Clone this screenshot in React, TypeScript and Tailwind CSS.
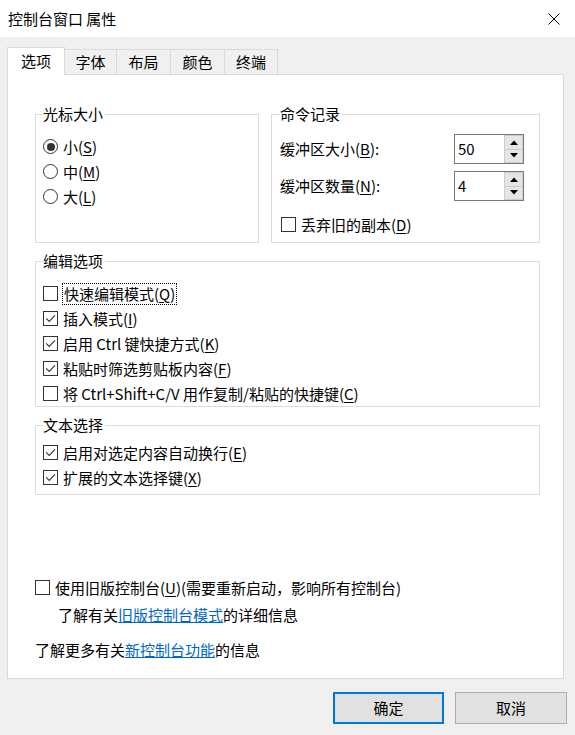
import React from "react";

function Check({ checked }: { checked?: boolean }) {
  return (
    <span className="w-[15px] h-[15px] border border-[#333333] bg-white flex items-center justify-center shrink-0">
      {checked && (
        <svg width="13" height="13" viewBox="0 0 13 13">
          <path d="M2.2 6.4 L5.2 9.4 L11 3.4" fill="none" stroke="#333333" strokeWidth="1.1" />
        </svg>
      )}
    </span>
  );
}

function Radio({ checked }: { checked?: boolean }) {
  return (
    <span className="w-[15px] h-[15px] rounded-full border border-[#333333] bg-white flex items-center justify-center shrink-0">
      {checked && <span className="w-[8px] h-[8px] rounded-full bg-[#333333]" />}
    </span>
  );
}

function Key({ k }: { k: string }) {
  return (
    <>
      (<u className="underline-offset-2">{k}</u>)
    </>
  );
}

function Spin({ value }: { value: string }) {
  return (
    <div className="w-[70px] h-[30px] border border-[#7a7a7a] bg-white flex">
      <span className="flex-1 pl-[3px] leading-[28px]">{value}</span>
      <div className="w-[19px] flex flex-col">
        <div className="flex-1 bg-[#e6e6e6] border border-[#cccccc] flex items-center justify-center">
          <svg width="8" height="5" viewBox="0 0 8 5">
            <path d="M0 5 L4 0.5 L8 5 Z" fill="#000" />
          </svg>
        </div>
        <div className="flex-1 bg-[#e6e6e6] border border-t-0 border-[#cccccc] flex items-center justify-center">
          <svg width="8" height="5" viewBox="0 0 8 5">
            <path d="M0 0 L4 4.5 L8 0 Z" fill="#000" />
          </svg>
        </div>
      </div>
    </div>
  );
}

function Row({ children }: { children: React.ReactNode }) {
  return <div className="h-[25px] flex items-center gap-[5px]">{children}</div>;
}

export default function App() {
  const tabs = [
    { label: "字体", w: "w-[52px]" },
    { label: "布局", w: "w-[54px]" },
    { label: "颜色", w: "w-[54px]" },
    { label: "终端", w: "w-[53px]" },
  ];

  return (
    <div className="w-[575px] h-[735px] bg-[#f0f0f0] flex flex-col font-['Noto_Sans_CJK_SC','Noto_Sans',sans-serif] text-[15px] leading-[20px] text-black">
      {/* title bar */}
      <div className="h-[37px] bg-white flex items-center justify-between pl-[8px] pr-[15px] shrink-0">
        <span>控制台窗口 属性</span>
        <svg width="12" height="12" viewBox="0 0 12 12">
          <path d="M0.5 0.5 L11.5 11.5 M11.5 0.5 L0.5 11.5" stroke="#000" strokeWidth="1" />
        </svg>
      </div>

      {/* tabs */}
      <div className="h-[37px] flex items-end pl-[7px] shrink-0">
        <div className="relative z-10 w-[58px] h-[28px] -mb-px bg-white border border-b-0 border-[#d9d9d9] flex items-center justify-center pb-[1px]">
          选项
        </div>
        {tabs.map((t) => (
          <div
            key={t.label}
            className={`${t.w} h-[25px] border-t border-r border-[#d9d9d9] flex items-center justify-center`}
          >
            {t.label}
          </div>
        ))}
      </div>

      {/* panel */}
      <div className="ml-[7px] w-[557px] h-[605px] bg-white border border-[#d9d9d9] pl-[27px] pt-[29px] shrink-0">
        <div className="w-[505px] h-[139px] flex gap-[12px]">
          <fieldset className="w-[224px] h-full border border-[#dcdcdc] pl-[7px]">
            <legend className="pr-[2px]">光标大小</legend>
            <div className="pt-[10px]">
              <Row>
                <Radio checked />
                <span>
                  小<Key k="S" />
                </span>
              </Row>
              <Row>
                <Radio />
                <span>
                  中<Key k="M" />
                </span>
              </Row>
              <Row>
                <Radio />
                <span>
                  大<Key k="L" />
                </span>
              </Row>
            </div>
          </fieldset>

          <fieldset className="w-[269px] h-full border border-[#dcdcdc] pl-[8px] pr-[15px]">
            <legend className="pr-[2px]">命令记录</legend>
            <div className="pt-[10px]">
              <div className="h-[30px] flex items-center justify-between">
                <span>
                  缓冲区大小<Key k="B" />:
                </span>
                <Spin value="50" />
              </div>
              <div className="h-[30px] mt-[7px] flex items-center justify-between">
                <span>
                  缓冲区数量<Key k="N" />:
                </span>
                <Spin value="4" />
              </div>
              <div className="mt-[11px] h-[25px] flex items-center gap-[5px] pl-px">
                <Check />
                <span>
                  丢弃旧的副本<Key k="D" />
                </span>
              </div>
            </div>
          </fieldset>
        </div>

        <fieldset className="w-[505px] mt-[8px] border border-[#dcdcdc] pl-[7px]">
          <legend className="pr-[2px]">编辑选项</legend>
          <div className="pt-[10px]">
            <Row>
              <Check />
              <span className="border border-dotted border-black h-[22px] flex items-center px-px -ml-px">
                快速编辑模式<Key k="Q" />
              </span>
            </Row>
            <Row>
              <Check checked />
              <span>
                插入模式<Key k="I" />
              </span>
            </Row>
            <Row>
              <Check checked />
              <span>
                启用 Ctrl 键快捷方式<Key k="K" />
              </span>
            </Row>
            <Row>
              <Check checked />
              <span>
                粘贴时筛选剪贴板内容<Key k="F" />
              </span>
            </Row>
            <Row>
              <Check />
              <span>
                将 Ctrl+Shift+C/V 用作复制/粘贴的快捷键<Key k="C" />
              </span>
            </Row>
          </div>
        </fieldset>

        <fieldset className="w-[505px] mt-[8px] border border-[#dcdcdc] pl-[7px] pb-[4px]">
          <legend className="pr-[2px]">文本选择</legend>
          <div className="pt-[5px]">
            <Row>
              <Check checked />
              <span>
                启用对选定内容自动换行<Key k="E" />
              </span>
            </Row>
            <Row>
              <Check checked />
              <span>
                扩展的文本选择键<Key k="X" />
              </span>
            </Row>
          </div>
        </fieldset>

        <div className="mt-[80px]">
          <Row>
            <Check />
            <span>
              使用旧版控制台<Key k="U" />(需要重新启动，影响所有控制台)
            </span>
          </Row>
          <div className="mt-[2px] h-[25px] flex items-center pl-[23px]">
            <span>
              了解有关<span className="text-[#0066cc] underline">旧版控制台模式</span>的详细信息
            </span>
          </div>
          <div className="mt-[10px] h-[25px] flex items-center">
            <span>
              了解更多有关<span className="text-[#0066cc] underline">新控制台功能</span>的信息
            </span>
          </div>
        </div>
      </div>

      {/* buttons */}
      <div className="mt-[13px] flex justify-end gap-[11px] pr-[8px]">
        <button className="w-[111px] h-[32px] bg-[#e1e1e1] border-2 border-[#0078d7] flex items-center justify-center">
          确定
        </button>
        <button className="w-[112px] h-[32px] bg-[#e1e1e1] border border-[#adadad] flex items-center justify-center">
          取消
        </button>
      </div>
    </div>
  );
}
